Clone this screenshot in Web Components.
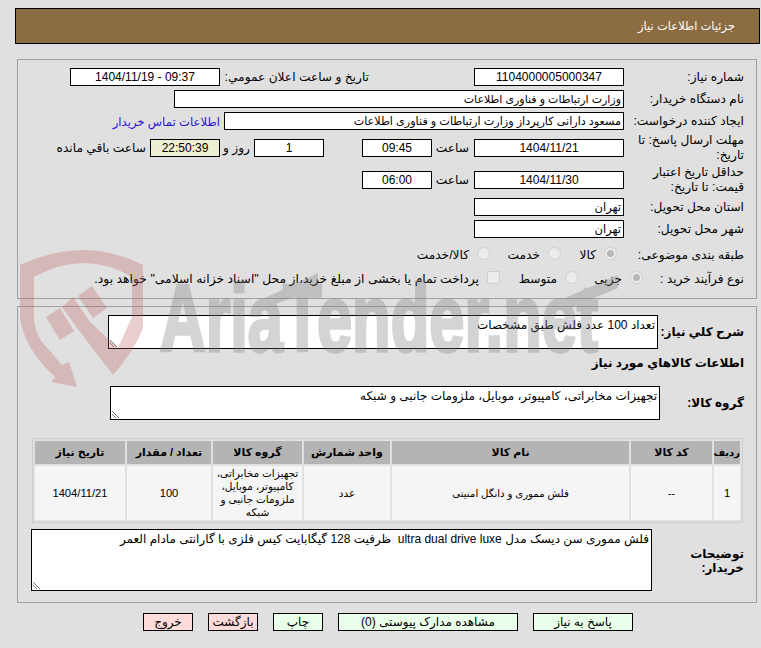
<!DOCTYPE html>
<html lang="fa">
<head>
<meta charset="utf-8">
<title>جزئيات اطلاعات نياز</title>
<style>
html, body { margin: 0; height: 100%; }
body { background: #e0e0e0; font-family: "Liberation Sans", "DejaVu Sans", sans-serif; font-size: 12px; color: #000; overflow: hidden; }
</style>
</head>
<body>
<need-page></need-page>

<script>
class NeedField extends HTMLElement {
    constructor() {
        super();
        this.attachShadow({mode: "open"});
        this.shadowRoot.innerHTML = `
        <style>
        :host { display: block; box-sizing: border-box; flex: none; height: 18px; background: #fff; border: 1px solid #000; line-height: 16px; font-size: 11.5px; padding: 0 2px; white-space: nowrap; overflow: hidden; text-align: right; }
        :host([center]) { text-align: center; font-size: 12px; }
        :host([tint]) { background: #eeeed2; }
        </style>
        <slot></slot>`;
    }
}

class NeedArea extends HTMLElement {
    constructor() {
        super();
        this.attachShadow({mode: "open"});
        this.shadowRoot.innerHTML = `
        <style>
        :host { display: block; box-sizing: border-box; flex: none; position: relative; background: #fff; border: 1px solid #000; font-size: 12px; line-height: 16px; padding: 1px 2px; text-align: right; }
        svg { position: absolute; left: 1px; bottom: 1px; }
        </style>
        <slot></slot>
        <svg width="8" height="8" viewBox="0 0 8 8"><path d="M0 1l7 7M0 4l4 4" stroke="#777" fill="none"/></svg>`;
    }
}

class NeedChoice extends HTMLElement {
    constructor() {
        super();
        this.attachShadow({mode: "open"});
        const box = this.hasAttribute("box");
        const on = this.hasAttribute("on");
        this.shadowRoot.innerHTML = `
        <style>
        :host { display: inline-flex; align-items: center; gap: 8px; white-space: nowrap; box-sizing: border-box; }
        .mark { box-sizing: border-box; flex: none; width: 13px; height: 13px; border: 1px solid #cfcfcf; background: #ececec; border-radius: ${box ? "2px" : "50%"}; display: flex; align-items: center; justify-content: center; position: relative; top: -2px; }
        .dot { width: 7px; height: 7px; border-radius: 50%; background: #b8b8b8; }
        </style>
        <span class="mark">${on ? '<span class="dot"></span>' : ""}</span>
        <slot></slot>`;
    }
}

class NeedButton extends HTMLElement {
    constructor() {
        super();
        this.attachShadow({mode: "open"});
        this.shadowRoot.innerHTML = `
        <style>
        :host { display: block; box-sizing: border-box; flex: none; height: 18px; width: 100px; line-height: 17px; text-align: center; background: #eaffea; border: 1px solid #000; font-size: 12px; white-space: nowrap; }
        :host([red]) { background: #ffdcdc; width: 50px; }
        :host([small]) { width: 50px; }
        :host([wide]) { width: 180px; }
        </style>
        <slot></slot>`;
    }
}

// the watermark sits over the whole form, see-through, as in the original
class NeedWatermark extends HTMLElement {
    constructor() {
        super();
        this.attachShadow({mode: "open"});
        this.shadowRoot.innerHTML = `
        <style>
        :host { display: block; position: absolute; left: 0; top: 0; z-index: 2; pointer-events: none; direction: ltr; }
        svg { display: block; }
        text { font-family: "Liberation Sans Narrow", "Liberation Sans", sans-serif; font-weight: 700; direction: ltr; }
        </style>
        <svg width="761" height="648" viewBox="0 0 761 648">
          <g opacity=".3" fill="#be5f5f">
            <path d="M20 265Q85 235 143 265L143 328Q135 350 113 375L118 348L132 317L132 277Q85 249 34 277L34 320Q35 332 42 342L62 365L69 362L77 387L51 382L55 377Q25 350 20 318Z"/>
            <path d="M46 317L60 308L74 331L60 340ZM78 296L92 286L107 308L93 318ZM62 307L73 297L90 322L118 348L113 375L77 328Z"/>
          </g>
          <g opacity=".32" fill="#7d7d7d">
            <text x="160" y="351" font-size="95" stroke="#7d7d7d" stroke-width="3.5" textLength="438" lengthAdjust="spacingAndGlyphs">AriaTender.net</text>
            <path d="M265 298L318 273L318 288L265 308ZM565 298L618 275L618 288L565 310Z"/>
          </g>
        </svg>`;
    }
}

class NeedPage extends HTMLElement {
    constructor() {
        super();
        this.attachShadow({mode: "open"});
        this.shadowRoot.innerHTML = `
        <style>
        :host { display: block; position: relative; width: 761px; height: 648px; direction: rtl; line-height: 15px; font-size: 12.2px; }
        .wrap { position: relative; display: flex; flex-direction: column; padding: 8px 1px 0 15px; }
        .title { box-sizing: border-box; height: 36px; background: #8c6c42; border: 1px solid #000; color: #fff; font-size: 11.5px; line-height: 34px; padding-right: 24px; }
        fieldset { box-sizing: border-box; border: 1px solid #a0a0a0; padding: 0; min-width: 0; }
        .one { margin: 15px 3px 0 2px; height: 240px; padding: 6px 12px 0 0; }
        .two { margin: 7px 3px 0 2px; height: 297px; padding: 0 12px 0 0; }
        .rows { display: flex; flex-direction: column; }
        .line { display: flex; align-items: center; }
        .lab { width: 120px; flex: none; }
        .w150 { width: 150px; }
        .sec { font-weight: 700; white-space: nowrap; flex: none; font-size: 12px; }
        .plain { white-space: nowrap; flex: none; }
        .row-a { height: 22px; }
        .deadline { height: 32px; }
        .a { color: #2a15d8; margin-right: 4px; white-space: nowrap; font-size: 11.7px; }
        .note { flex: none; white-space: nowrap; box-sizing: border-box; }
        .pick { height: 24px; }
        .ltr { direction: ltr; }
        .buttons { display: flex; gap: 15px; margin: 10px 127px 0 0; }
        table { border-collapse: separate; border-spacing: 2px; border: 1px solid #ccc; width: 711px; table-layout: fixed; font-size: 10.5px; text-align: center; margin: 18px 1px 0 0; flex: none; }
        th { background: #b4b4b4; height: 23px; padding: 0; font-size: 11px; }
        th.tight { font-size: 10px; }
        td { background: #f5f5f5; height: 54px; padding: 0; line-height: 13px; }
        td.num { font-size: 11.2px; }
        </style>
        <need-watermark></need-watermark>
        <div class="wrap">
          <div class="title">جزئيات اطلاعات نياز</div>

          <fieldset class="one"><div class="rows">
            <div class="line row-a">
              <span class="lab">شماره نياز:</span>
              <need-field center class="w150">1104000005000347</need-field>
              <span class="note" style="width:254px;padding-right:105px">تاريخ و ساعت اعلان عمومي:</span>
              <need-field center class="w150 ltr">1404/11/19 - 09:37</need-field>
            </div>
            <div class="line row-a">
              <span class="lab">نام دستگاه خريدار:</span>
              <need-field style="width:450px;font-size:11px">وزارت ارتباطات و فناوری اطلاعات</need-field>
            </div>
            <div class="line row-a">
              <span class="lab">ايجاد کننده درخواست:</span>
              <need-field style="width:400px;font-size:11.2px">مسعود دارانی کارپرداز وزارت ارتباطات و فناوری اطلاعات</need-field>
              <span class="a">اطلاعات تماس خريدار</span>
            </div>
            <div class="line deadline">
              <span class="lab">مهلت ارسال پاسخ: تا تاريخ:</span>
              <need-field center class="w150">1404/11/21</need-field>
              <span class="note" style="width:42px;padding-right:5px">ساعت</span>
              <need-field center style="width:70px">09:45</need-field>
              <span class="note" style="width:38px"></span>
              <need-field center style="width:70px">1</need-field>
              <span class="note" style="width:34px;padding-right:4px">روز و</span>
              <need-field center tint style="width:70px">22:50:39</need-field>
              <span class="note" style="margin-right:4px">ساعت باقي مانده</span>
            </div>
            <div class="line deadline">
              <span class="lab">حداقل تاريخ اعتبار قيمت: تا تاريخ:</span>
              <need-field center class="w150">1404/11/30</need-field>
              <span class="note" style="width:42px;padding-right:5px">ساعت</span>
              <need-field center style="width:70px">06:00</need-field>
            </div>
            <div class="line row-a">
              <span class="lab">استان محل تحويل:</span>
              <need-field class="w150">تهران</need-field>
            </div>
            <div class="line row-a">
              <span class="lab">شهر محل تحويل:</span>
              <need-field class="w150">تهران</need-field>
            </div>
            <div class="line pick" style="margin-top:3px">
              <span class="plain" style="width:127px">طبقه بندی موضوعی:</span>
              <need-choice on style="width:56px">کالا</need-choice>
              <need-choice style="width:71px">خدمت</need-choice>
              <need-choice>کالا/خدمت</need-choice>
            </div>
            <div class="line pick">
              <span class="plain" style="width:101px">نوع فرآيند خريد :</span>
              <need-choice on style="width:65px">جزیی</need-choice>
              <need-choice style="width:78px">متوسط</need-choice>
              <need-choice box style="font-size:12.35px">پرداخت تمام يا بخشی از مبلغ خريد،از محل "اسناد خزانه اسلامی" خواهد بود.</need-choice>
            </div>
          </div></fieldset>

          <fieldset class="two"><div class="rows">
            <div class="line" style="margin-top:8px">
              <span class="sec" style="width:86px">شرح كلي نياز:</span>
              <need-area style="width:550px;height:34px">تعداد 100 عدد فلش طبق مشخصات</need-area>
            </div>
            <div class="sec" style="margin-top:6px;height:31px;line-height:17px">اطلاعات كالاهاي مورد نياز</div>
            <div class="line">
              <span class="sec" style="width:84px">گروه كالا:</span>
              <need-area style="width:550px;height:34px">تجهيزات مخابراتی، کامپيوتر، موبايل، ملزومات جانبی و شبکه</need-area>
            </div>
            <table>
              <colgroup><col style="width:26px"><col style="width:81px"><col style="width:237px"><col style="width:86px"><col style="width:89px"><col style="width:84px"><col></colgroup>
              <tr><th class="tight">رديف</th><th>کد کالا</th><th>نام کالا</th><th>واحد شمارش</th><th>گروه کالا</th><th>تعداد / مقدار</th><th>تاريخ نياز</th></tr>
              <tr><td class="num">1</td><td>--</td><td style="font-size:10.2px">فلش مموری و دانگل امنيتی</td><td>عدد</td><td>تجهيزات مخابراتی، کامپيوتر، موبايل، ملزومات جانبی و شبکه</td><td class="num">100</td><td class="num">1404/11/21</td></tr>
            </table>
            <div class="line" style="margin-top:6px;align-items:flex-start">
              <span class="sec" style="box-sizing:border-box;padding-top:18px;width:92px;white-space:normal;line-height:14px">توضيحات خريدار:</span>
              <need-area style="width:621px;height:62px">فلش مموری سن ديسک مدل ultra dual drive luxe&nbsp; ظرفيت 128 گيگابايت کيس فلزی با گارانتی مادام العمر</need-area>
            </div>
          </div></fieldset>

          <div class="buttons">
            <need-button>پاسخ به نياز</need-button>
            <need-button wide>مشاهده مدارک پيوستی (0)</need-button>
            <need-button small>چاپ</need-button>
            <need-button red>بازگشت</need-button>
            <need-button red>خروج</need-button>
          </div>
        </div>`;
    }
}

customElements.define("need-field", NeedField);
customElements.define("need-area", NeedArea);
customElements.define("need-choice", NeedChoice);
customElements.define("need-button", NeedButton);
customElements.define("need-watermark", NeedWatermark);
customElements.define("need-page", NeedPage);
</script>
</body>
</html>
